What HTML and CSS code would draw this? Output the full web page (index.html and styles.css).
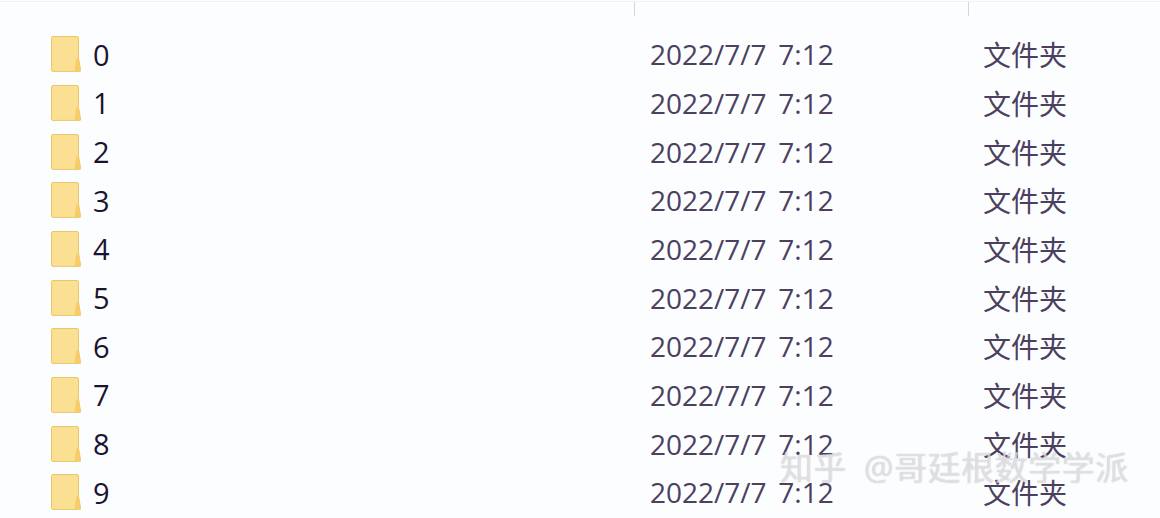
FILE: index.html
```html
<!DOCTYPE html>
<html lang="zh-CN">
<head>
  <meta charset="UTF-8" />
  <title>文件夹</title>
  <link rel="stylesheet" href="styles.css">
</head>
<body>
  <svg class="defs" width="0" height="0">
    <symbol id="folder" viewBox="0 0 30 36">
      <path d="M2 .5H26A1.5 1.5 0 0 1 27.5 2V22L29.6 34.2A1 1 0 0 1 28.6 35.4H2A1.5 1.5 0 0 1 .5 34V2A1.5 1.5 0 0 1 2 .5Z" fill="#fbe094" stroke="#eac868"/>
      <path d="M23.6 35L24.8 25C25.2 22.4 26.4 21.4 27.6 21.6L29.6 34.2A1 1 0 0 1 28.6 35.4Z" fill="#f6cd68"/>
    </symbol>
  </svg>

  <div class="header">
    <span class="col-sep"></span>
    <span class="col-sep"></span>
  </div>

  <div class="file-list">
    <div class="row"><div class="name"><svg class="icon"><use href="#folder"/></svg>0</div><div class="date">2022/7/7 7:12</div><div class="type">文件夹</div></div>
    <div class="row"><div class="name"><svg class="icon"><use href="#folder"/></svg>1</div><div class="date">2022/7/7 7:12</div><div class="type">文件夹</div></div>
    <div class="row"><div class="name"><svg class="icon"><use href="#folder"/></svg>2</div><div class="date">2022/7/7 7:12</div><div class="type">文件夹</div></div>
    <div class="row"><div class="name"><svg class="icon"><use href="#folder"/></svg>3</div><div class="date">2022/7/7 7:12</div><div class="type">文件夹</div></div>
    <div class="row"><div class="name"><svg class="icon"><use href="#folder"/></svg>4</div><div class="date">2022/7/7 7:12</div><div class="type">文件夹</div></div>
    <div class="row"><div class="name"><svg class="icon"><use href="#folder"/></svg>5</div><div class="date">2022/7/7 7:12</div><div class="type">文件夹</div></div>
    <div class="row"><div class="name"><svg class="icon"><use href="#folder"/></svg>6</div><div class="date">2022/7/7 7:12</div><div class="type">文件夹</div></div>
    <div class="row"><div class="name"><svg class="icon"><use href="#folder"/></svg>7</div><div class="date">2022/7/7 7:12</div><div class="type">文件夹</div></div>
    <div class="row"><div class="name"><svg class="icon"><use href="#folder"/></svg>8</div><div class="date">2022/7/7 7:12</div><div class="type">文件夹</div></div>
    <div class="row"><div class="name"><svg class="icon"><use href="#folder"/></svg>9</div><div class="date">2022/7/7 7:12</div><div class="type">文件夹</div></div>
  </div>

  <div class="watermark">知乎 @哥廷根数学学派</div>
</body>
</html>
```

FILE: styles.css
```css
html, body {
  height: 100%;
}

body {
  margin: 0;
  height: 518px;
  overflow: hidden;
  position: relative;
  background-color: #fcfdfe;
  font-family: 'Open Sans', 'Noto Sans CJK SC', sans-serif;
  font-size: 28px;
}

.defs {
  display: none;
}

.header {
  display: grid;
  grid-template-columns: 335px 334px;
  padding-left: 300px;
  height: 14px;
  margin-top: 1px;
  border-top: 1px solid #eff1f3;
}

.col-sep {
  justify-self: end;
  width: 1px;
  height: 14px;
  background-color: #d3d6da;
}

.file-list {
  display: flex;
  flex-direction: column;
  padding-top: 14px;
}

.row {
  display: grid;
  grid-template-columns: 650px 333px 1fr;
  align-items: center;
  height: 48.67px;
}

.name {
  display: flex;
  align-items: center;
  gap: 12px;
  padding-left: 51px;
  font-size: 29px;
  color: #1a1430;
}

.icon {
  width: 30px;
  height: 36px;
}

.date {
  color: #4b4060;
  word-spacing: 4.4px;
}

.type {
  color: #4b4060;
}

.watermark {
  position: absolute;
  left: 780px;
  top: 448px;
  font-size: 33px;
  line-height: 40px;
  letter-spacing: 0.5px;
  word-spacing: 8px;
  white-space: nowrap;
  color: rgba(255, 255, 255, 0.6);
  text-shadow: 0 0 1px rgba(120, 120, 130, 0.6);
}
```
